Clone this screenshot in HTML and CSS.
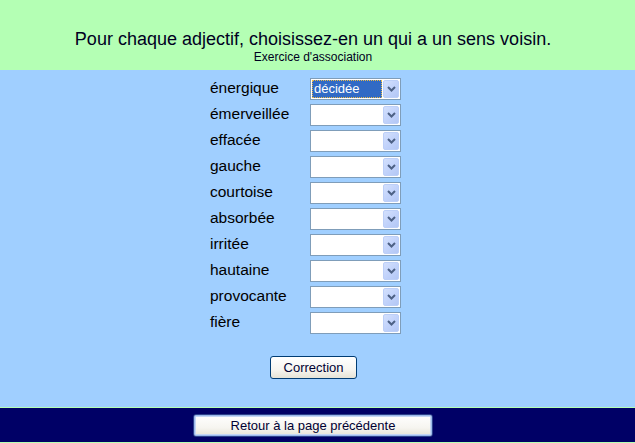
FILE: index.html
```html
<!DOCTYPE html>
<html lang="fr">
<head>
<meta charset="utf-8">
<title>Exercice d'association</title>
<link rel="stylesheet" href="styles.css">
</head>
<body>
<header class="top">
  <h1 class="title">Pour chaque adjectif, choisissez-en un qui a un sens voisin.</h1>
  <p class="subtitle">Exercice d'association</p>
</header>
<main class="exercise">
  <div class="rows">
    <div class="row"><span class="label">énergique</span><div class="combo"><span class="value"><span class="picked">décidée</span></span><span class="drop"><svg width="9" height="6" viewBox="0 0 9 6"><path d="M1 1 L4.5 4.5 L8 1" fill="none" stroke="#4d6185" stroke-width="2"/></svg></span></div></div>
    <div class="row"><span class="label">émerveillée</span><div class="combo"><span class="value"></span><span class="drop"><svg width="9" height="6" viewBox="0 0 9 6"><path d="M1 1 L4.5 4.5 L8 1" fill="none" stroke="#4d6185" stroke-width="2"/></svg></span></div></div>
    <div class="row"><span class="label">effacée</span><div class="combo"><span class="value"></span><span class="drop"><svg width="9" height="6" viewBox="0 0 9 6"><path d="M1 1 L4.5 4.5 L8 1" fill="none" stroke="#4d6185" stroke-width="2"/></svg></span></div></div>
    <div class="row"><span class="label">gauche</span><div class="combo"><span class="value"></span><span class="drop"><svg width="9" height="6" viewBox="0 0 9 6"><path d="M1 1 L4.5 4.5 L8 1" fill="none" stroke="#4d6185" stroke-width="2"/></svg></span></div></div>
    <div class="row"><span class="label">courtoise</span><div class="combo"><span class="value"></span><span class="drop"><svg width="9" height="6" viewBox="0 0 9 6"><path d="M1 1 L4.5 4.5 L8 1" fill="none" stroke="#4d6185" stroke-width="2"/></svg></span></div></div>
    <div class="row"><span class="label">absorbée</span><div class="combo"><span class="value"></span><span class="drop"><svg width="9" height="6" viewBox="0 0 9 6"><path d="M1 1 L4.5 4.5 L8 1" fill="none" stroke="#4d6185" stroke-width="2"/></svg></span></div></div>
    <div class="row"><span class="label">irritée</span><div class="combo"><span class="value"></span><span class="drop"><svg width="9" height="6" viewBox="0 0 9 6"><path d="M1 1 L4.5 4.5 L8 1" fill="none" stroke="#4d6185" stroke-width="2"/></svg></span></div></div>
    <div class="row"><span class="label">hautaine</span><div class="combo"><span class="value"></span><span class="drop"><svg width="9" height="6" viewBox="0 0 9 6"><path d="M1 1 L4.5 4.5 L8 1" fill="none" stroke="#4d6185" stroke-width="2"/></svg></span></div></div>
    <div class="row"><span class="label">provocante</span><div class="combo"><span class="value"></span><span class="drop"><svg width="9" height="6" viewBox="0 0 9 6"><path d="M1 1 L4.5 4.5 L8 1" fill="none" stroke="#4d6185" stroke-width="2"/></svg></span></div></div>
    <div class="row"><span class="label">fière</span><div class="combo"><span class="value"></span><span class="drop"><svg width="9" height="6" viewBox="0 0 9 6"><path d="M1 1 L4.5 4.5 L8 1" fill="none" stroke="#4d6185" stroke-width="2"/></svg></span></div></div>
  </div>
  <div class="actions"><button class="btn correction" type="button">Correction</button></div>
</main>
<footer class="bottom">
  <button class="btn back" type="button">Retour à la page précédente</button>
</footer>
</body>
</html>
```

FILE: styles.css
```css
html, body {
  margin: 0;
  padding: 0;
}
body {
  background: #b4ffb4;
  font-family: "Liberation Sans", Arial, sans-serif;
  color: #000;
}
.top {
  height: 70px;
  box-sizing: border-box;
  padding: 28px 9px 0 0;
  text-align: center;
  background: #b4ffb4;
}
.title {
  margin: 0;
  font-size: 18px;
  font-weight: normal;
  line-height: 22px;
  color: #000022;
}
.subtitle {
  margin: 0;
  font-size: 12px;
  line-height: 14px;
  color: #000022;
}
.exercise {
  background: #a0cfff;
  height: 337px;
  box-sizing: border-box;
  padding: 8px 0 0 210px;
}
.rows {
  display: flex;
  flex-direction: column;
  gap: 4px;
}
.row {
  display: flex;
  align-items: flex-start;
  height: 22px;
}
.label {
  width: 100px;
  font-size: 15.5px;
  line-height: 19px;
  color: #000;
}
.combo {
  width: 91px;
  height: 22px;
  box-sizing: border-box;
  border: 1px solid #7f9db9;
  background: #fff;
  display: flex;
  align-items: center;
  padding: 1px;
  gap: 1px;
}
.value {
  flex: 1;
  height: 18px;
  display: flex;
}
.picked {
  flex: 1;
  background: #316ac5;
  color: #fff;
  font-size: 13px;
  line-height: 16px;
  padding-left: 1px;
  border: 1px dotted #e8b84a;
}
.drop {
  width: 16px;
  height: 18px;
  box-sizing: border-box;
  border: 1px solid #bccff8;
  border-radius: 2px;
  background: linear-gradient(135deg, #d3e0fd 0%, #c2d3fb 50%, #b3c7f5 100%);
  display: flex;
  align-items: center;
  justify-content: center;
}
.actions {
  margin-top: 22px;
  padding-left: 60px;
}
.btn {
  font-family: "Liberation Sans", Arial, sans-serif;
  font-size: 13px;
  color: #000033;
  background: linear-gradient(#ffffff 0%, #f6f5f0 60%, #e6e3d6 100%);
  border: 1px solid #003c74;
  border-radius: 3px;
  padding: 0;
  height: 23px;
  box-sizing: border-box;
}
.correction {
  width: 87px;
}
.bottom {
  margin-top: 1px;
  background: #000066;
  height: 34px;
  box-sizing: border-box;
  padding: 6px 0 0 193px;
}
.back {
  width: 240px;
  border-color: #2b3f8a;
  box-shadow: inset 0 0 0 1px #9bb8ea, inset 0 0 0 2px #c4d6f5;
}
```
